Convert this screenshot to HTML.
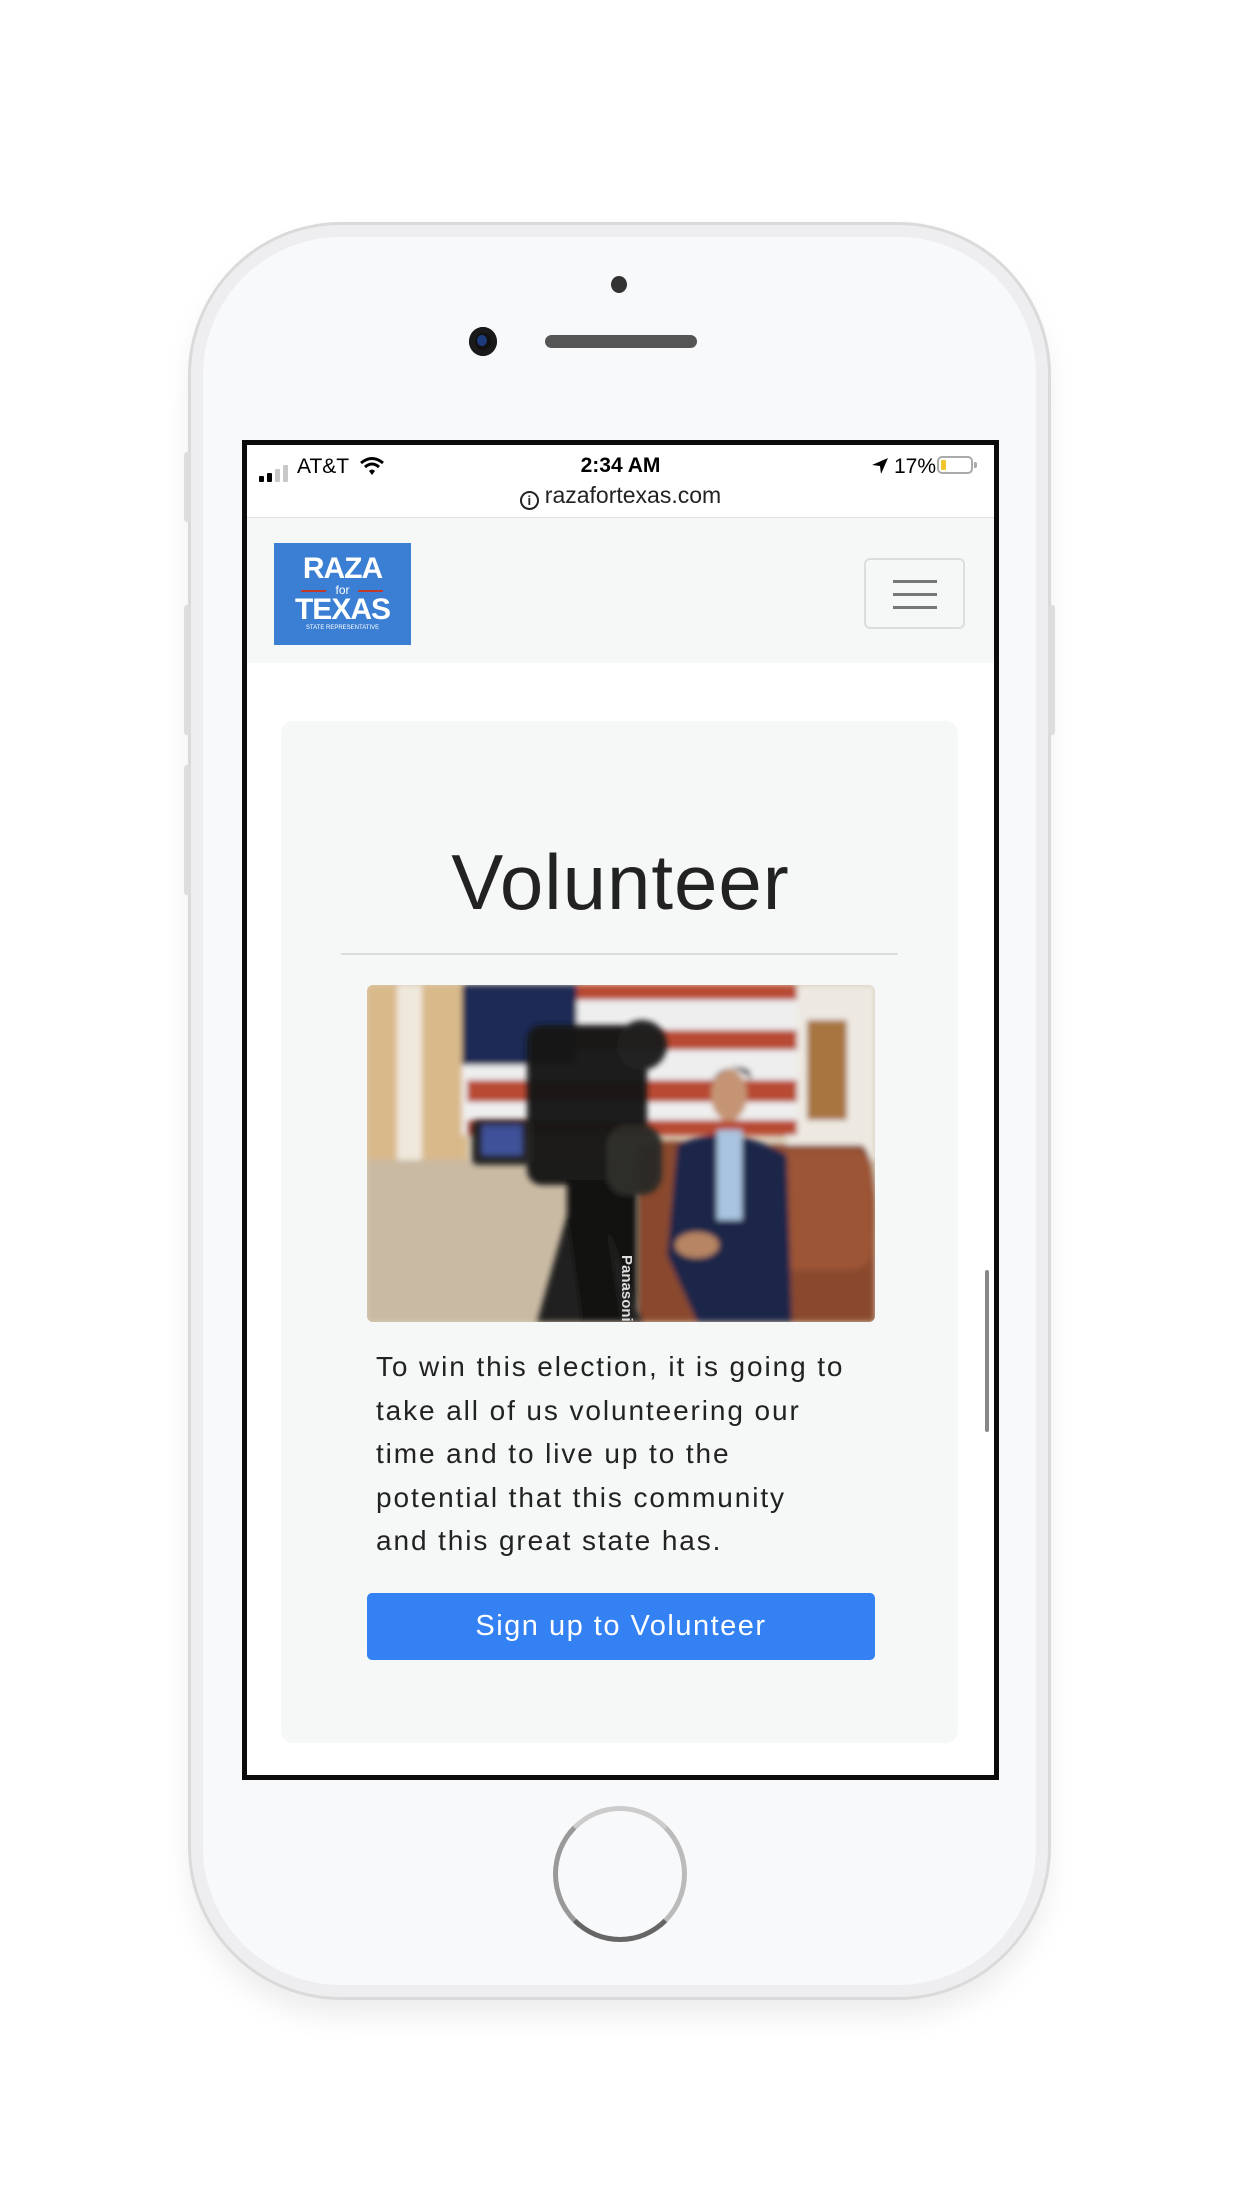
<!DOCTYPE html>
<html><head><meta charset="utf-8"><style>
*{margin:0;padding:0;box-sizing:border-box}
body{width:1242px;height:2208px;background:#fff;position:relative;overflow:hidden;font-family:"Liberation Sans",sans-serif}
.abs{position:absolute}
.phone{left:191px;top:225px;width:857px;height:1772px;border-radius:150px;background:#f8f9fb;border:12px solid #eeeef0;box-shadow:0 0 0 3px #dadada,0 18px 30px rgba(0,0,0,0.08)}
.screen{left:242px;top:440px;width:757px;height:1340px;border:5px solid #0b0b0b;background:#fff;overflow:hidden}
</style></head><body>
<div class="abs phone"></div>
<div class="abs" style="left:184px;top:452px;width:7px;height:70px;background:#ddd;border-radius:3px"></div>
<div class="abs" style="left:184px;top:605px;width:7px;height:130px;background:#ddd;border-radius:3px"></div>
<div class="abs" style="left:184px;top:765px;width:7px;height:130px;background:#ddd;border-radius:3px"></div>
<div class="abs" style="left:1048px;top:605px;width:7px;height:130px;background:#ddd;border-radius:3px"></div>
<div class="abs" style="left:611px;top:276px;width:16px;height:17px;border-radius:50%;background:#333"></div>
<div class="abs" style="left:469px;top:327px;width:28px;height:29px;border-radius:50%;background:#111;box-shadow:inset 0 0 0 6px #1a1a1a"><div style="margin:8px;width:10px;height:11px;border-radius:50%;background:#1d3a7a"></div></div>
<div class="abs" style="left:545px;top:335px;width:152px;height:13px;border-radius:7px;background:#555"></div>
<div class="abs" style="left:553px;top:1806px;width:134px;height:136px;border-radius:50%;border:5px solid #999;border-top-color:#ccc;border-right-color:#bbb;border-bottom-color:#666;background:#f8f9fb"></div>

<div class="abs screen">
  <div class="abs" style="left:12px;top:20px;display:flex;align-items:flex-end;gap:3px">
    <div style="width:5px;height:6px;background:#000;border-radius:1px"></div>
    <div style="width:5px;height:9px;background:#000;border-radius:1px"></div>
    <div style="width:5px;height:13px;background:#c8c8c8;border-radius:1px"></div>
    <div style="width:5px;height:17px;background:#c8c8c8;border-radius:1px"></div>
  </div>
  <div class="abs" style="left:50px;top:10px;font-size:21px;color:#000">AT&amp;T</div>
  <svg class="abs" style="left:112px;top:11px" width="26" height="20" viewBox="0 0 26 20"><path d="M2 7 Q13 -2 24 7" stroke="#000" stroke-width="3" fill="none"/><path d="M6 11 Q13 5 20 11" stroke="#000" stroke-width="3" fill="none"/><path d="M10 15 L13 19 L16 15 Q13 12 10 15Z" fill="#000"/></svg>
  <div class="abs" style="left:0;width:747px;top:9px;text-align:center;font-size:21px;font-weight:bold;color:#000">2:34 AM</div>
  <svg class="abs" style="left:624px;top:12px" width="18" height="18" viewBox="0 0 18 18"><path d="M17 1 L1 8 L9 9 L10 17Z" fill="#000"/></svg>
  <div class="abs" style="left:647px;top:10px;font-size:21px;color:#000">17%</div>
  <div class="abs" style="left:690px;top:11px;width:36px;height:18px;border:2px solid #aaa;border-radius:5px"><div style="margin:2px;width:5px;height:10px;background:#f3c52c;border-radius:1px"></div></div>
  <div class="abs" style="left:727px;top:17px;width:3px;height:6px;background:#aaa;border-radius:0 2px 2px 0"></div>
  <div class="abs" style="left:0;width:747px;top:37px;text-align:center;font-size:23px;color:#222"><span style="display:inline-block;width:19px;height:19px;border:2px solid #222;border-radius:50%;font-size:13px;line-height:15px;font-weight:bold;vertical-align:-2px;margin-right:6px">i</span>razafortexas.com</div>
  <div class="abs" style="left:0;top:72px;width:747px;height:146px;background:#f6f7f7;border-top:1px solid #e0e0e0"></div>
  <div class="abs" style="left:27px;top:98px;width:137px;height:102px;background:#3a7fd3;color:#fff;text-align:center">
    <div style="font-size:30px;font-weight:bold;margin-top:11px;line-height:30px;letter-spacing:-1px">RAZA</div>
    <div style="font-size:12px;line-height:12px;position:relative">for<span class="abs" style="left:27px;top:6px;width:25px;height:2px;background:#c0392b"></span><span class="abs" style="left:84px;top:6px;width:25px;height:2px;background:#c0392b"></span></div>
    <div style="font-size:30px;font-weight:bold;line-height:28px;letter-spacing:-1px">TEXAS</div>
    <div style="font-size:6px;line-height:8px">STATE REPRESENTATIVE</div>
  </div>
  <div class="abs" style="left:617px;top:113px;width:101px;height:71px;border:2px solid #ddd;border-radius:6px">
    <div style="position:absolute;left:27px;top:20px;width:44px;height:3px;background:#777"></div>
    <div style="position:absolute;left:27px;top:33px;width:44px;height:3px;background:#777"></div>
    <div style="position:absolute;left:27px;top:46px;width:44px;height:3px;background:#777"></div>
  </div>
  <div class="abs" style="left:34px;top:276px;width:677px;height:1022px;background:#f6f7f7;border-radius:12px"></div>
  <div class="abs" style="left:0;width:747px;top:392px;text-align:center;font-size:78px;color:#222;letter-spacing:1px">Volunteer</div>
  <div class="abs" style="left:94px;top:508px;width:557px;height:2px;background:#dcdcdc"></div>
  <svg class="abs" style="left:120px;top:540px;border-radius:6px" width="508" height="337" viewBox="0 0 508 337">
    <defs><filter id="b"><feGaussianBlur stdDeviation="3"/></filter></defs>
    <rect width="508" height="337" fill="#d8cbb5"/>
    <g filter="url(#b)">
    <rect x="0" y="0" width="100" height="180" fill="#d9b98a"/>
    <rect x="30" y="0" width="25" height="180" fill="#efe8dc"/>
    <rect x="0" y="175" width="508" height="162" fill="#c9baa3"/>
    <rect x="420" y="0" width="88" height="175" fill="#ede9e2"/>
    <rect x="440" y="35" width="40" height="100" fill="#a8753f"/>
    <rect x="95" y="0" width="335" height="150" fill="#eee"/>
    <rect x="95" y="0" width="115" height="80" fill="#1d2c55"/>
    <rect x="210" y="0" width="220" height="15" fill="#b84a30"/>
    <rect x="210" y="45" width="220" height="20" fill="#b84a30"/>
    <rect x="100" y="95" width="330" height="22" fill="#b84a30"/>
    <rect x="100" y="135" width="330" height="15" fill="#b84a30"/>
    <path d="M270 165 Q280 150 360 160 L495 160 Q510 170 508 250 L508 337 L270 337Z" fill="#8a4a2d"/>
    <rect x="380" y="165" width="125" height="120" rx="20" fill="#9c5534"/>
    <path d="M310 160 Q360 135 420 170 L425 337 L330 337 L300 270Z" fill="#1c2748"/>
    <rect x="350" y="145" width="25" height="90" fill="#a9c4e0"/>
    <ellipse cx="362" cy="110" rx="18" ry="26" fill="#c49474"/>
    <path d="M343 98 Q360 70 385 95 L382 85 Q362 75 343 98Z" fill="#1a1512"/>
    <ellipse cx="330" cy="260" rx="22" ry="13" fill="#b78564"/>
    </g>
    <g filter="url(#b)" opacity="0.97">
    <rect x="160" y="40" width="120" height="160" rx="15" fill="#161616"/>
    <rect x="105" y="135" width="60" height="45" rx="6" fill="#222"/>
    <rect x="115" y="140" width="40" height="30" fill="#3b4f9a"/>
    <rect x="200" y="195" width="70" height="142" fill="#111"/>
    <path d="M170 337 L200 230 L215 337Z" fill="#1a1a1a"/>
    <path d="M240 240 L275 337 L255 337Z" fill="#1a1a1a"/>
    <circle cx="275" cy="60" r="25" fill="#1c1c1c"/>
    <rect x="240" y="140" width="55" height="70" rx="20" fill="#2c2a26"/>
    </g>
    <text x="255" y="270" transform="rotate(90 255 270)" font-size="15" font-weight="bold" fill="#ddd" font-family="Liberation Sans,sans-serif">Panasonic</text>
  </svg>
  <div class="abs" style="left:129px;top:900px;font-size:28px;line-height:43.5px;color:#222;white-space:nowrap;letter-spacing:1.9px">To win this election, it is going to<br>take all of us volunteering our<br>time and to live up to the<br>potential that this community<br>and this great state has.</div>
  <div class="abs" style="left:120px;top:1148px;width:508px;height:67px;background:#3381f3;border-radius:5px;color:#fff;font-size:29px;text-align:center;line-height:67px;letter-spacing:1.5px">Sign up to Volunteer</div>
  <div class="abs" style="left:738px;top:825px;width:4px;height:162px;background:#888;border-radius:2px"></div>
</div>
</body></html>
